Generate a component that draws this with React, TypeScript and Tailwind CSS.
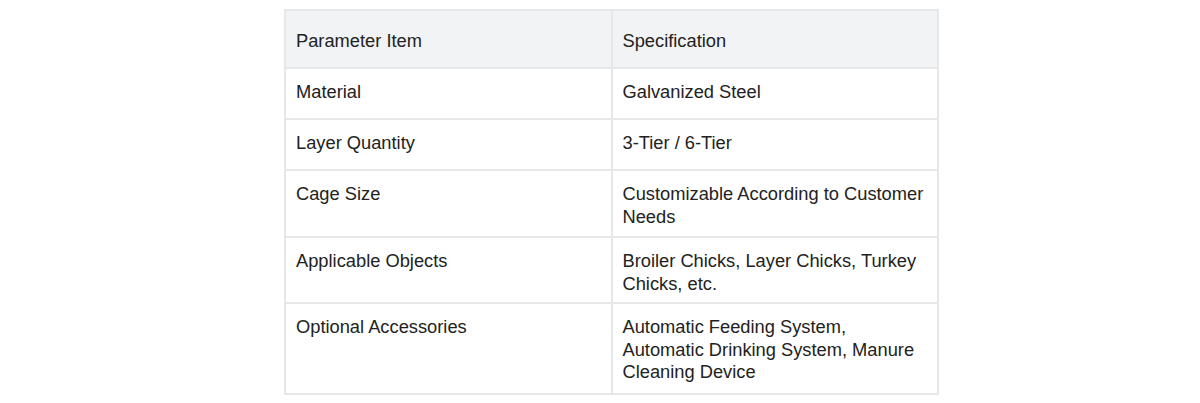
const rows: { param: string; spec: string[]; h: string }[] = [
  { param: "Material", spec: ["Galvanized Steel"], h: "h-[51px]" },
  { param: "Layer Quantity", spec: ["3-Tier / 6-Tier"], h: "h-[51px]" },
  { param: "Cage Size", spec: ["Customizable According to Customer", "Needs"], h: "h-[67px]" },
  { param: "Applicable Objects", spec: ["Broiler Chicks, Layer Chicks, Turkey", "Chicks, etc."], h: "h-[66px]" },
  {
    param: "Optional Accessories",
    spec: ["Automatic Feeding System,", "Automatic Drinking System, Manure", "Cleaning Device"],
    h: "h-[91px]",
  },
];

export default function App() {
  return (
    <div className="w-[1200px] h-[403px] bg-white pt-[9px] pl-[284px] font-['Liberation_Sans',Arial,sans-serif] text-[18.3px] leading-[22.5px] text-[#222222]">
      <table className="w-[655px] table-fixed border-collapse border-2 border-[#e6e7e9]">
        <thead>
          <tr className="h-[58px] bg-[#f2f3f5]">
            <th className="w-1/2 border-2 border-[#e6e7e9] px-[10px] pt-[19px] pb-0 text-left align-top font-normal">
              Parameter Item
            </th>
            <th className="w-1/2 border-2 border-[#e6e7e9] px-[10px] pt-[19px] pb-0 text-left align-top font-normal">
              Specification
            </th>
          </tr>
        </thead>
        <tbody>
          {rows.map((r) => (
            <tr key={r.param} className={r.h}>
              <td className="border-2 border-[#e6e7e9] px-[10px] pt-[12px] pb-0 align-top">{r.param}</td>
              <td className="border-2 border-[#e6e7e9] px-[10px] pt-[12px] pb-0 align-top">
                {r.spec.map((line) => (
                  <div key={line} className="whitespace-nowrap">
                    {line}
                  </div>
                ))}
              </td>
            </tr>
          ))}
        </tbody>
      </table>
    </div>
  );
}
